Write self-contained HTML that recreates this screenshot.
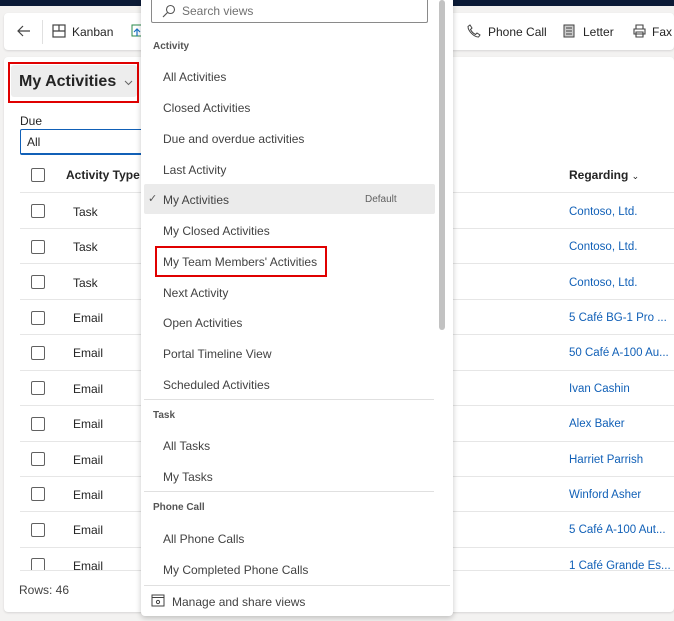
<!DOCTYPE html>
<html><head><meta charset="utf-8"><style>
*{margin:0;padding:0;box-sizing:border-box}
body{width:674px;height:621px;overflow:hidden;background:#f3f2f1;font-family:"Segoe UI","Liberation Sans",sans-serif;font-size:12px;color:#242424;position:relative}
.a{position:absolute;white-space:nowrap}
.cb{position:absolute;left:31px;width:14px;height:14px;border:1px solid #616161;border-radius:2px;background:#fff}
.sep{position:absolute;left:20px;width:654px;height:1px;background:#e6e6e6}
.lnk{color:#1160b7;font-size:11.5px;margin-top:2px!important}
.it{position:absolute;left:163px;font-size:12px;color:#424242;margin-top:1px}
.hd{position:absolute;left:153px;font-size:10px;font-weight:bold;color:#555;margin-top:1px}
.dsep{position:absolute;left:144px;width:290px;height:1px;background:#e0e0e0}
.r{margin-top:1px}
</style></head><body>
<div class="a" style="left:0;top:0;width:674px;height:6px;background:#0b1a36"></div>
<div class="a" style="left:4px;top:13px;width:670px;height:37px;background:#fff;border-radius:4px;box-shadow:0 1px 2px rgba(0,0,0,.12)"></div>
<svg class="a" style="left:17px;top:25px" width="14" height="12" viewBox="0 0 14 12"><path d="M6 1L1 6l5 5M1 6h12" fill="none" stroke="#424242" stroke-width="1.2"/></svg>
<div class="a" style="left:42px;top:20px;width:1px;height:24px;background:#e0e0e0"></div>
<svg class="a" style="left:52px;top:24px" width="14" height="14" viewBox="0 0 14 14"><rect x="1" y="1" width="12" height="12" fill="none" stroke="#424242" stroke-width="1.2"/><path d="M7 1v6M1 7h12" stroke="#424242" stroke-width="1.2"/></svg>
<div class="a" style="left:72px;top:25px;font-size:12px">Kanban</div>
<svg class="a" style="left:131px;top:24px" width="12" height="14" viewBox="0 0 12 14"><rect x="1" y="1" width="11" height="11" fill="none" stroke="#2a8a4a" stroke-width="1"/><path d="M6 12V5M3 8l3-3 3 3" fill="none" stroke="#1a73c4" stroke-width="1.2"/></svg>
<svg class="a" style="left:467px;top:24px" width="14" height="14" viewBox="0 0 14 14"><path d="M3 1l2 3-1.5 1.5c1 2 3 4 5 5L10 9l3 2-1.5 2C7 13 1 7 1 2.5z" fill="none" stroke="#424242" stroke-width="1"/></svg>
<div class="a" style="left:488px;top:25px">Phone Call</div>
<svg class="a" style="left:563px;top:24px" width="12" height="14" viewBox="0 0 12 14"><rect x="1" y="1" width="10" height="12" fill="#ccc" stroke="#424242" stroke-width="1"/><path d="M3 4h6M3 7h6M3 10h6" stroke="#424242"/></svg>
<div class="a" style="left:583px;top:25px">Letter</div>
<svg class="a" style="left:632px;top:24px" width="15" height="14" viewBox="0 0 15 14"><path d="M4 5V1h7v4M2 5h11v5H2zM4 8h7v5H4z" fill="none" stroke="#424242" stroke-width="1.1"/></svg>
<div class="a" style="left:652px;top:25px">Fax</div>

<div class="a" style="left:4px;top:57px;width:670px;height:555px;background:#fff;border-radius:4px;box-shadow:0 1px 2px rgba(0,0,0,.12)"></div>
<div class="a" style="left:11px;top:65px;width:126px;height:32px;background:#ededed;border-radius:3px"></div>
<div class="a" style="left:8px;top:62px;width:131px;height:41px;border:2px solid #e00000"></div>
<div class="a" style="left:19px;top:73px;font-size:16px;font-weight:600;color:#242424">My Activities</div>
<svg class="a" style="left:124px;top:80px" width="9" height="6" viewBox="0 0 9 6"><path d="M1 1l3.5 3.5L8 1" fill="none" stroke="#666" stroke-width="1"/></svg>
<div class="a" style="left:20px;top:114px;font-size:12px">Due</div>
<div class="a" style="left:20px;top:129px;width:140px;height:26px;border:1px solid #1160b7;border-bottom:2px solid #1160b7;border-radius:2px"></div>
<div class="a" style="left:27px;top:135px">All</div>

<div class="cb" style="top:168px"></div>
<div class="a" style="left:66px;top:168px;font-weight:600">Activity Type</div>
<div class="a" style="left:569px;top:168px;font-weight:600">Regarding <span style="font-weight:normal;font-size:9px">&#8964;</span></div>
<div class="sep" style="top:192px"></div>

<div class="cb" style="top:204px"></div><div class="a r" style="left:73px;top:204px">Task</div><div class="a lnk" style="left:569px;top:204px">Contoso, Ltd.</div><div class="sep" style="top:228px"></div>
<div class="cb" style="top:240px"></div><div class="a r" style="left:73px;top:239px">Task</div><div class="a lnk" style="left:569px;top:239px">Contoso, Ltd.</div><div class="sep" style="top:263px"></div>
<div class="cb" style="top:275px"></div><div class="a r" style="left:73px;top:275px">Task</div><div class="a lnk" style="left:569px;top:275px">Contoso, Ltd.</div><div class="sep" style="top:299px"></div>
<div class="cb" style="top:311px"></div><div class="a r" style="left:73px;top:310px">Email</div><div class="a lnk" style="left:569px;top:310px">5 Café BG-1 Pro ...</div><div class="sep" style="top:334px"></div>
<div class="cb" style="top:346px"></div><div class="a r" style="left:73px;top:345px">Email</div><div class="a lnk" style="left:569px;top:345px">50 Café A-100 Au...</div><div class="sep" style="top:370px"></div>
<div class="cb" style="top:381px"></div><div class="a r" style="left:73px;top:381px">Email</div><div class="a lnk" style="left:569px;top:381px">Ivan Cashin</div><div class="sep" style="top:405px"></div>
<div class="cb" style="top:417px"></div><div class="a r" style="left:73px;top:416px">Email</div><div class="a lnk" style="left:569px;top:416px">Alex Baker</div><div class="sep" style="top:441px"></div>
<div class="cb" style="top:452px"></div><div class="a r" style="left:73px;top:452px">Email</div><div class="a lnk" style="left:569px;top:452px">Harriet Parrish</div><div class="sep" style="top:476px"></div>
<div class="cb" style="top:487px"></div><div class="a r" style="left:73px;top:487px">Email</div><div class="a lnk" style="left:569px;top:487px">Winford Asher</div><div class="sep" style="top:511px"></div>
<div class="cb" style="top:523px"></div><div class="a r" style="left:73px;top:522px">Email</div><div class="a lnk" style="left:569px;top:522px">5 Café A-100 Aut...</div><div class="sep" style="top:547px"></div>
<div class="a" style="left:0;top:557px;width:674px;height:13px;overflow:hidden">
<div class="cb" style="top:1px"></div><div class="a r" style="left:73px;top:1px">Email</div><div class="a lnk" style="left:569px;top:1px">1 Café Grande Es...</div></div>
<div class="sep" style="top:570px"></div>
<div class="a" style="left:19px;top:583px;color:#424242">Rows: 46</div>

<div class="a" style="left:141px;top:0;width:312px;height:616px;background:#fff;border-radius:0 0 4px 4px;box-shadow:0 2px 6px rgba(0,0,0,.22)"></div>
<div class="a" style="left:151px;top:0;width:277px;height:23px;border:1px solid #8a8a8a;border-top:none;border-radius:0 0 2px 2px"></div>
<svg class="a" style="left:162px;top:4px" width="14" height="14" viewBox="0 0 14 14"><circle cx="8.5" cy="5.5" r="4" fill="none" stroke="#555" stroke-width="1.1"/><path d="M5.5 8.5L1 13" stroke="#555" stroke-width="1.2"/></svg>
<div class="a" style="left:182px;top:4px;color:#707070">Search views</div>
<div class="hd" style="top:40px">Activity</div>
<div class="it" style="top:69px">All Activities</div>
<div class="it" style="top:100px">Closed Activities</div>
<div class="it" style="top:131px">Due and overdue activities</div>
<div class="it" style="top:162px">Last Activity</div>
<div class="a" style="left:144px;top:184px;width:291px;height:30px;background:#ebebeb;border-radius:2px"></div>
<div class="a" style="left:148px;top:192px;font-size:11px;color:#555">✓</div>
<div class="it" style="top:192px">My Activities</div>
<div class="a" style="left:365px;top:194px;font-size:10px;color:#616161">Default</div>
<div class="it" style="top:223px">My Closed Activities</div>
<div class="a" style="left:155px;top:246px;width:172px;height:31px;border:2px solid #e00000"></div>
<div class="it" style="top:254px">My Team Members' Activities</div>
<div class="it" style="top:285px">Next Activity</div>
<div class="it" style="top:315px">Open Activities</div>
<div class="it" style="top:346px">Portal Timeline View</div>
<div class="it" style="top:377px">Scheduled Activities</div>
<div class="dsep" style="top:399px"></div>
<div class="hd" style="top:409px">Task</div>
<div class="it" style="top:438px">All Tasks</div>
<div class="it" style="top:469px">My Tasks</div>
<div class="dsep" style="top:491px"></div>
<div class="hd" style="top:501px">Phone Call</div>
<div class="it" style="top:531px">All Phone Calls</div>
<div class="it" style="top:562px">My Completed Phone Calls</div>
<div class="a" style="left:144px;top:585px;width:306px;height:1px;background:#e0e0e0"></div>
<svg class="a" style="left:151px;top:594px" width="14" height="13" viewBox="0 0 14 13"><rect x="1" y="1" width="12" height="11" fill="none" stroke="#424242"/><path d="M1 3.5h12" stroke="#424242"/><circle cx="7" cy="8" r="1.6" fill="none" stroke="#424242"/></svg>
<div class="it" style="left:172px;top:594px">Manage and share views</div>
<div class="a" style="left:439px;top:0;width:6px;height:330px;background:#c2c2c2;border-radius:3px"></div>
</body></html>
